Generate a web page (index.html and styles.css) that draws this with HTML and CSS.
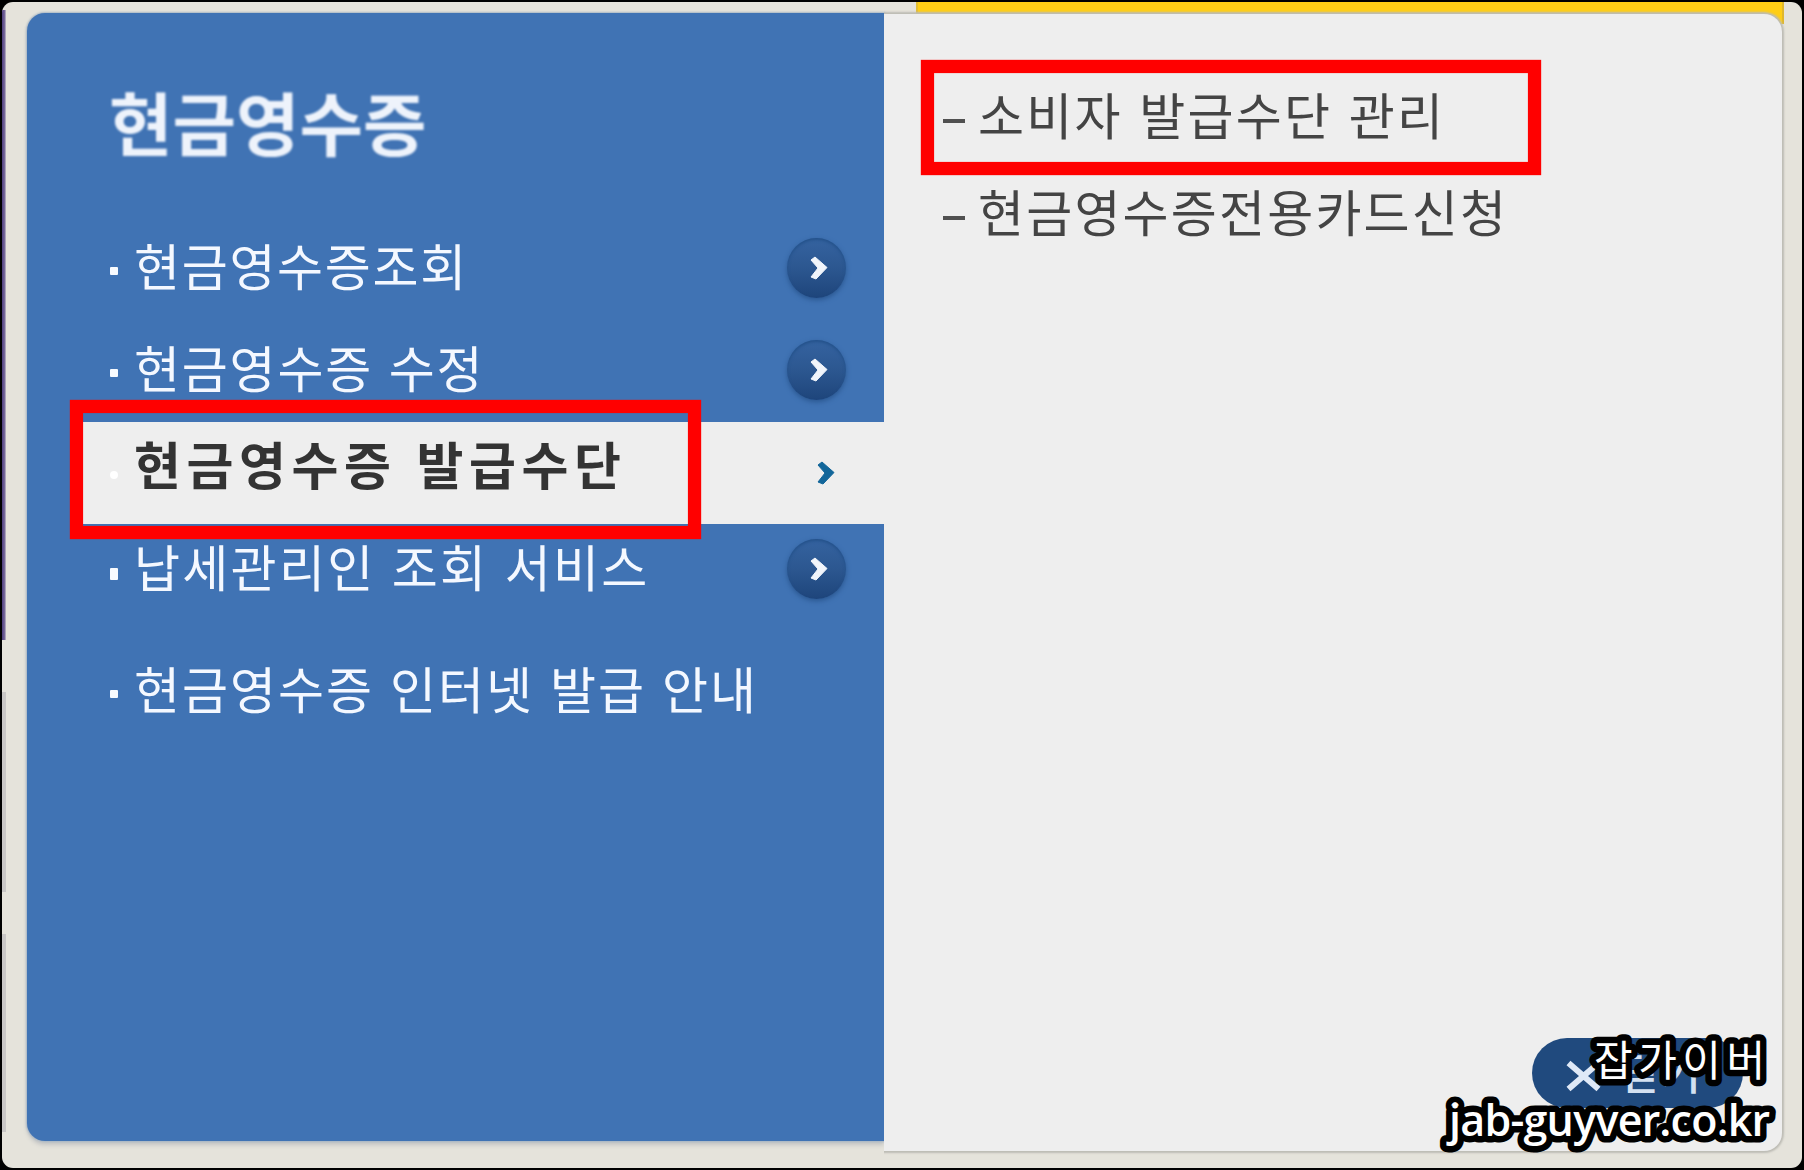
FILE: index.html
```
<!DOCTYPE html>
<html lang="ko">
<head>
<meta charset="utf-8">
<title>현금영수증</title>
<link rel="stylesheet" href="styles.css">
</head>
<body>
<main class="frame">
  <i class="edge edge-purple"></i><i class="edge edge-gray"></i><i class="edge edge-gray2"></i>
  <i class="yellow"></i>
  <section class="menu">
    <h1 class="title">현금영수증</h1>
    <ul class="list">
      <li class="row"><i class="dot"></i><span class="label l1">현금영수증조회</span><i class="round"><svg class="chev" viewBox="0 0 18 24"><path d="M1 4L5 1L17 11.500L6 23L1 21L8 12Z"/></svg></i></li>
      <li class="row"><i class="dot"></i><span class="label l2">현금영수증 수정</span><i class="round"><svg class="chev" viewBox="0 0 18 24"><path d="M1 4L5 1L17 11.500L6 23L1 21L8 12Z"/></svg></i></li>
      <li class="row active"><i class="dot"></i><span class="label l3">현금영수증 발급수단</span><svg class="chev" viewBox="0 0 18 24"><path d="M1 4L5 1L17 11.500L6 23L1 21L8 12Z"/></svg><i class="mark mark-menu"></i></li>
      <li class="row fourth"><i class="dot tall"></i><span class="label l4">납세관리인 조회 서비스</span><i class="round"><svg class="chev" viewBox="0 0 18 24"><path d="M1 4L5 1L17 11.500L6 23L1 21L8 12Z"/></svg></i></li>
      <li class="row last"><i class="dot"></i><span class="label l5">현금영수증 인터넷 발급 안내</span></li>
    </ul>
  </section>
  <section class="sub">
    <ul class="sublist">
      <li class="item"><i class="dash"></i><span class="label s1">소비자 발급수단 관리</span><i class="mark mark-sub"></i></li>
      <li class="item"><i class="dash"></i><span class="label s2">현금영수증전용카드신청</span></li>
    </ul>
    <button class="close"><svg class="x" viewBox="0 0 36 32"><path d="M3 3L33 29M33 3L3 29"/></svg><span class="close-text">닫기</span></button>
  </section>
  <svg class="water" viewBox="0 0 360 136">
    <text class="w1" x="154" y="46">잡가이버</text>
    <text class="w2" x="9" y="106">jab-guyver.co.kr</text>
  </svg>
</main>
</body>
</html>
```
FILE: styles.css
```
* { box-sizing: border-box; }
body { margin: 0; background: #000; font-family: "Noto Sans CJK KR", sans-serif; overflow: hidden; }
ul { list-style: none; margin: 0; padding: 0; }
i { display: block; }
.frame { position: relative; width: 1800px; height: 1166px; margin: 2px; padding: 11px 18px 0 25px; display: flex; align-items: flex-start; background: #e5e3db; border-radius: 11px; overflow: hidden; }
.edge { position: absolute; left: 0; width: 4px; background: linear-gradient(90deg, #4f3e80, #7a6c9c 70%, #cfc9d0); }
.edge-purple { top: 8px; height: 630px; }
.edge-gray { top: 690px; height: 200px; background: #c9c7c6; }
.edge-gray2 { top: 932px; height: 198px; background: #c9c7c6; }
.yellow { position: absolute; left: 914px; top: 0; width: 868px; height: 22px; background: #ffce15; border-left: 2px solid #e2bd35; border-right: 2px solid #dfb72c; }
.menu { width: 857px; height: 1128px; background: #4073b4; border-radius: 18px 0 0 18px; box-shadow: 0 0 2px 1px #a9b7c5, 0 4px 4px #c3c4c4; }
.title { margin: 0; padding: 58px 0 0 82px; height: 205px; color: #eef3fb; font-size: 69px; line-height: 100px; font-weight: 700; filter: blur(1px); white-space: nowrap; }
.row { position: relative; display: flex; align-items: center; height: 102px; padding: 0 38px 0 83px; color: #f4f8ff; }
.row.active { background: linear-gradient(90deg, #4073b4 50px, #eee 50px); color: #333; padding-right: 49px; }
.row.fourth { height: 90px; }
.row.last { height: 155px; }
.dot { width: 8px; height: 8px; margin: 4px 16px 0 0; background: #f8fbff; border-radius: 1px; flex: none; }
.dot.tall { height: 12px; margin-top: 10px; }
.active .dot { border-radius: 50%; margin-top: 4px; background: #fff; }
.label { font-size: 50px; line-height: 64px; white-space: nowrap; flex: none; margin-bottom: 11px; }
.l1 { letter-spacing: 1.7px; }
.l2 { letter-spacing: 1.8px; }
.l3 { font-weight: 700; font-size: 51px; letter-spacing: 5.6px; margin-bottom: 20px; }
.l4 { letter-spacing: 2.3px; margin-bottom: 8px; }
.l5 { letter-spacing: 2px; margin-bottom: 9px; }
.s1 { letter-spacing: 2.3px; margin-bottom: 8px; }
.s2 { letter-spacing: 2.2px; margin-bottom: 8px; }
.round { width: 59px; height: 60px; margin-left: auto; border-radius: 50%; background: linear-gradient(#3563a0, #2c5790 50%, #1e457b); box-shadow: inset 0 2px 3px #24528b, 0 2px 5px #2a5790; display: flex; align-items: center; justify-content: center; padding-left: 5px; }
.row:not(.active):not(.fourth) .round { margin-top: -2px; }
.chev { width: 18px; height: 24px; fill: #f1f5fb; stroke: #f1f5fb; stroke-width: 1; }
.active .chev { margin-left: auto; fill: #12669a; stroke: #12669a; }
.mark { position: absolute; border: 13px solid #f00; box-shadow: 0 0 1px #f00, inset 0 0 1px #f00; }
.mark-menu { left: 43px; top: -22px; width: 631px; height: 139px; }
.sub { position: relative; width: 898px; height: 1137px; margin-top: 1px; background: #eee; border-radius: 0 18px 18px 0; box-shadow: 0 0 2px 2px #bdbcb5; clip-path: inset(-4px -4px -4px 0); }
.sublist { padding-top: 54px; }
.item { position: relative; display: flex; align-items: center; height: 97px; padding-left: 59px; color: #444; }
.dash { width: 22px; height: 4px; background: #505050; margin: 8px 13px 0 0; flex: none; }
.mark-sub { left: 37px; top: -8px; width: 620px; height: 115px; }
.close { position: absolute; left: 648px; top: 1024px; width: 211px; height: 70px; border: 0; border-radius: 35px; background: #204a7e; color: #d4e1f1; display: flex; align-items: center; padding: 0 0 0 33px; gap: 18px; font: 500 44px/50px "Noto Sans CJK KR", sans-serif; }
.close-text { margin-top: -4px; }
.x { width: 37px; height: 32px; margin-top: 6px; fill: none; stroke: #dfe9f7; stroke-width: 6; flex: none; }
.water { position: absolute; left: 1438px; top: 1028px; width: 360px; height: 136px; overflow: visible; fill: #fff; stroke: #000; stroke-width: 13px; stroke-linejoin: round; paint-order: stroke fill; }
.w1 { font-size: 42px; font-weight: 400; letter-spacing: 5.5px; }
.w2 { font: 600 43px "Open Sans", sans-serif; letter-spacing: -0.75px; }
```
